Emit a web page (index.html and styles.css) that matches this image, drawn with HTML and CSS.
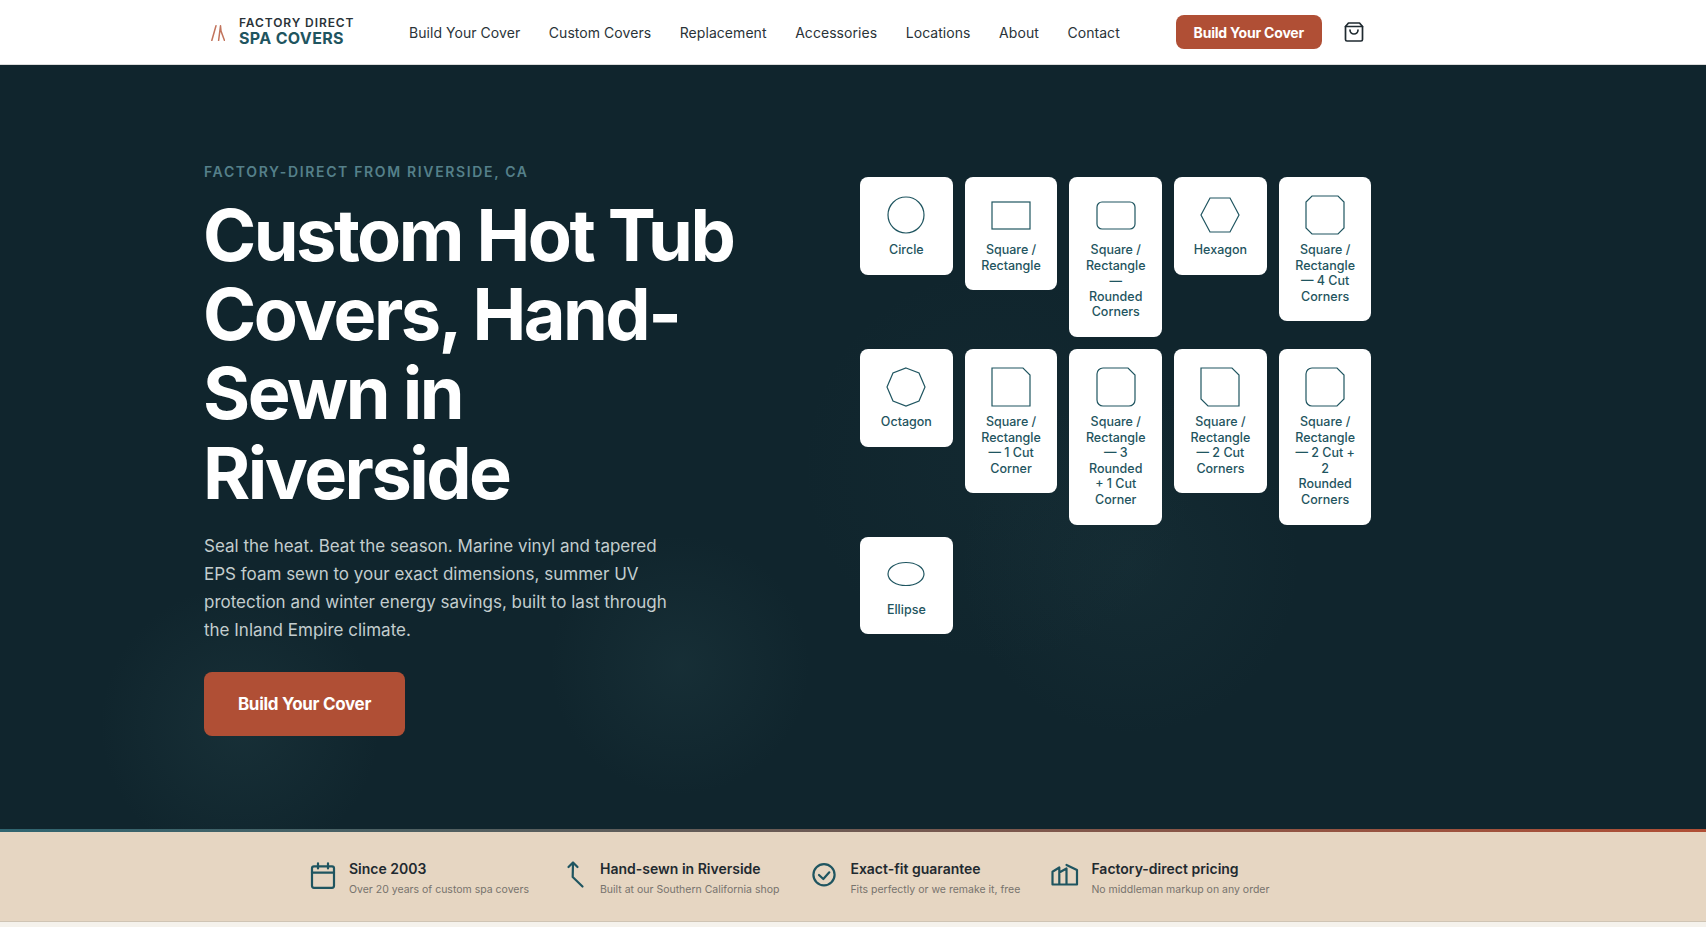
FILE: index.html
```html
<!DOCTYPE html>
<html lang="en">
<head>
  <meta charset="UTF-8" />
  <title>Factory Direct Spa Covers</title>
  <link rel="stylesheet" href="styles.css">
</head>
<body>
  <header class="site-header">
    <a class="logo" href="#">
      <svg class="logo-mark" width="14" height="16" viewBox="0 0 14 16" fill="none">
        <path d="M0.8 15.5 L5 0.8 M9.5 0.8 L7.6 15.5 M9.500 0.800 L10 6 L13.500 15.5" />
      </svg>
      <span class="logo-text">
        <span class="logo-top">FACTORY DIRECT</span>
        <span class="logo-bottom">SPA COVERS</span>
      </span>
    </a>
    <nav class="main-nav">
      <a href="#">Build Your Cover</a>
      <a href="#">Custom Covers</a>
      <a href="#">Replacement</a>
      <a href="#">Accessories</a>
      <a href="#">Locations</a>
      <a href="#">About</a>
      <a href="#">Contact</a>
    </nav>
    <a class="btn btn-small" href="#">Build Your Cover</a>
    <a class="cart" href="#" aria-label="Cart">
      <svg width="24" height="24" viewBox="0 0 24 24" fill="none">
        <path d="M6.5 3 H17.5 L20.5 6.5 V19.5 A1.5 1.5 0 0 1 19 21 H5 A1.5 1.5 0 0 1 3.5 19.5 V6.5 Z" />
        <path d="M3.5 6.5 H20.5" />
        <path d="M8 10 A4 4 0 0 0 16 10" />
      </svg>
    </a>
  </header>

  <section class="hero">
    <div class="hero-inner">
      <div class="hero-copy">
        <p class="eyebrow">FACTORY-DIRECT FROM RIVERSIDE, CA</p>
        <h1>Custom Hot Tub Covers, Hand-Sewn in Riverside</h1>
        <p class="lead">Seal the heat. Beat the season. Marine vinyl and tapered EPS foam sewn to your exact dimensions, summer UV protection and winter energy savings, built to last through the Inland Empire climate.</p>
        <a class="btn btn-large" href="#">Build Your Cover</a>
      </div>

      <div class="shape-grid">
        <a class="shape-card" href="#">
          <svg viewBox="0 0 44 44"><circle cx="22" cy="22" r="18" /></svg>
          <span>Circle</span>
        </a>
        <a class="shape-card" href="#">
          <svg viewBox="0 0 44 44"><rect x="3" y="9" width="38" height="27" /></svg>
          <span>Square / Rectangle</span>
        </a>
        <a class="shape-card" href="#">
          <svg viewBox="0 0 44 44"><rect x="3" y="9" width="38" height="27" rx="5" /></svg>
          <span>Square / Rectangle — Rounded Corners</span>
        </a>
        <a class="shape-card" href="#">
          <svg viewBox="0 0 44 44"><polygon points="12,5 32,5 41,22 32,39 12,39 3,22" /></svg>
          <span>Hexagon</span>
        </a>
        <a class="shape-card" href="#">
          <svg viewBox="0 0 44 44"><polygon points="9,3 35,3 41,9 41,35 35,41 9,41 3,35 3,9" /></svg>
          <span>Square / Rectangle — 4 Cut Corners</span>
        </a>
        <a class="shape-card" href="#">
          <svg viewBox="0 0 44 44"><polygon points="22,3 35,8 41,22 35,36 22,41 9,36 3,22 9,8" /></svg>
          <span>Octagon</span>
        </a>
        <a class="shape-card" href="#">
          <svg viewBox="0 0 44 44"><polygon points="3,3 34,3 41,10 41,41 3,41" /></svg>
          <span>Square / Rectangle — 1 Cut Corner</span>
        </a>
        <a class="shape-card" href="#">
          <svg viewBox="0 0 44 44"><path d="M9 3 H34 L41 10 V35 A6 6 0 0 1 35 41 H9 A6 6 0 0 1 3 35 V9 A6 6 0 0 1 9 3 Z" /></svg>
          <span>Square / Rectangle — 3 Rounded<br>+ 1 Cut Corner</span>
        </a>
        <a class="shape-card" href="#">
          <svg viewBox="0 0 44 44"><polygon points="3,3 34,3 41,10 41,41 10,41 3,34" /></svg>
          <span>Square / Rectangle — 2 Cut Corners</span>
        </a>
        <a class="shape-card" href="#">
          <svg viewBox="0 0 44 44"><path d="M9 3 H34 L41 10 V34 L34 41 H9 A6 6 0 0 1 3 35 V9 A6 6 0 0 1 9 3 Z" /></svg>
          <span>Square / Rectangle — 2 Cut + 2<br>Rounded Corners</span>
        </a>
        <a class="shape-card" href="#">
          <svg viewBox="0 0 44 44"><ellipse cx="22" cy="21" rx="18" ry="11.5" /></svg>
          <span>Ellipse</span>
        </a>
      </div>
    </div>
  </section>

  <div class="accent-line"></div>

  <section class="trust-bar">
    <div class="trust-item">
      <svg viewBox="0 0 24 26"><rect x="1" y="7.300" width="22" height="21.500" rx="2" /><path d="M1 13.700 H23 M7 4.300 V9.500 M17 4.300 V9.500" /></svg>
      <div>
        <strong>Since 2003</strong>
        <small>Over 20 years of custom spa covers</small>
      </div>
    </div>
    <div class="trust-item">
      <svg viewBox="0 0 24 26"><path d="M6.500 8 L11 3.500 L15.500 8 M11 3.500 L10.700 18 L20.500 27.500" /></svg>
      <div>
        <strong>Hand-sewn in Riverside</strong>
        <small>Built at our Southern California shop</small>
      </div>
    </div>
    <div class="trust-item">
      <svg viewBox="0 0 24 26"><circle cx="12" cy="15.700" r="10.600" /><path d="M7 16 L11.300 20 L17.300 13.300" /></svg>
      <div>
        <strong>Exact-fit guarantee</strong>
        <small>Fits perfectly or we remake it, free</small>
      </div>
    </div>
    <div class="trust-item">
      <svg viewBox="0 0 24 26"><path d="M-.5 25.500 V12.700 L6.300 8.500 V25.500 M6.300 13.500 L13.500 9.500 V25.500 M13.500 6 L24 11 V25.500 H-.5" /></svg>
      <div>
        <strong>Factory-direct pricing</strong>
        <small>No middleman markup on any order</small>
      </div>
    </div>
  </section>
</body>
</html>
```

FILE: styles.css
```css
* {
  box-sizing: border-box;
}
body {
  margin: 0;
  font-family: 'Inter', 'Liberation Sans', sans-serif;
  background-color: #f5f2ec;
  color: #1f2a30;
}
a {
  text-decoration: none;
  color: inherit;
}

/* header */
.site-header {
  display: flex;
  align-items: center;
  height: 65px;
  padding-left: 211px;
  background-color: #ffffff;
  border-bottom: 1px solid #dcdcdc;
}
.logo {
  display: flex;
  align-items: center;
  gap: 14px;
  width: 198px;
}
.logo-mark {
  margin-top: 2px;
}
.logo-mark path {
  stroke: #c2745c;
  stroke-width: 1.5;
  stroke-linecap: round;
}
.logo-text {
  display: flex;
  flex-direction: column;
  margin-top: -2px;
}
.logo-top {
  font-size: 12px;
  line-height: 14px;
  font-weight: 600;
  letter-spacing: 0.9px;
  color: #2a3338;
}
.logo-bottom {
  font-size: 16px;
  line-height: 16px;
  font-weight: 700;
  letter-spacing: 0.35px;
  color: #1f5560;
}
.main-nav {
  display: flex;
  gap: 28.6px;
  font-size: 14px;
  letter-spacing: 0.05px;
  color: #2a3338;
}
.btn {
  display: inline-flex;
  align-items: center;
  justify-content: center;
  background-color: #b04f35;
  color: #ffffff;
  font-weight: 700;
  border-radius: 8px;
}
.btn-small {
  width: 146px;
  height: 34px;
  margin-left: 56px;
  font-size: 14px;
  letter-spacing: -0.2px;
}
.btn-large {
  width: 201px;
  height: 64px;
  font-size: 17px;
  letter-spacing: -0.3px;
}
.cart {
  display: flex;
  margin-left: 20px;
}
.cart path {
  stroke: #1f2a30;
  stroke-width: 1.7;
  stroke-linejoin: round;
  stroke-linecap: round;
}

/* hero */
.hero {
  height: 764px;
  padding: 96px 0 0 204px;
  background-color: #10252d;
  background-image:
    radial-gradient(circle at 240px 660px, rgba(60, 100, 105, 0.17), transparent 140px),
    radial-gradient(circle at 680px 600px, rgba(60, 100, 105, 0.15), transparent 130px),
    radial-gradient(circle at 1130px 500px, rgba(60, 100, 105, 0.1), transparent 170px),
    radial-gradient(circle at 1000px 400px, rgba(60, 100, 105, 0.06), transparent 200px);
}
.hero-inner {
  display: flex;
  gap: 96px;
  align-items: flex-start;
}
.hero-copy {
  width: 560px;
  flex-shrink: 0;
}
.eyebrow {
  margin: 1px 0 13px;
  font-size: 14px;
  line-height: 20px;
  font-weight: 600;
  letter-spacing: 1.65px;
  color: #55808a;
}
h1 {
  margin: 0 0 20px -1px;
  font-size: 72px;
  line-height: 79.2px;
  font-weight: 700;
  letter-spacing: -2.5px;
  color: #ffffff;
}
.lead {
  width: 480px;
  margin: 0 0 28px;
  font-size: 17px;
  line-height: 28px;
  color: #c3cdce;
}
.shape-grid {
  display: grid;
  grid-template-columns: repeat(5, 1fr);
  gap: 12px;
  align-items: start;
  width: 511.5px;
  margin-top: 16px;
}
.shape-card {
  display: flex;
  flex-direction: column;
  align-items: center;
  gap: 5px;
  padding: 16px 14px 17px;
  background-color: #ffffff;
  border-radius: 8px;
  text-align: center;
}
.shape-card svg {
  width: 44px;
  height: 44px;
  fill: none;
  stroke: #1f5560;
  stroke-width: 1.2;
}
.shape-card span {
  font-size: 12.5px;
  line-height: 15.6px;
  font-weight: 500;
  color: #1f5560;
}

/* trust bar */
.accent-line {
  height: 3px;
  background: linear-gradient(to right, #2f6570, #b04f35);
}
.trust-bar {
  display: flex;
  gap: 33px;
  height: 90px;
  padding: 28px 0 0 311px;
  background-color: #e6d6c2;
  border-bottom: 1px solid #cfc4b4;
}
.trust-item {
  display: flex;
  gap: 14px;
}
.trust-item svg {
  width: 24px;
  height: 26px;
  margin-top: -1px;
  flex-shrink: 0;
  overflow: visible;
  fill: none;
  stroke: #1f5560;
  stroke-width: 2.2;
  stroke-linecap: round;
  stroke-linejoin: round;
}
.trust-item strong {
  display: block;
  font-size: 14px;
  line-height: 18px;
  font-weight: 600;
  color: #1f2a30;
}
.trust-item small {
  display: block;
  margin-top: 4px;
  font-size: 10.5px;
  line-height: 16px;
  color: #77736d;
}
```
